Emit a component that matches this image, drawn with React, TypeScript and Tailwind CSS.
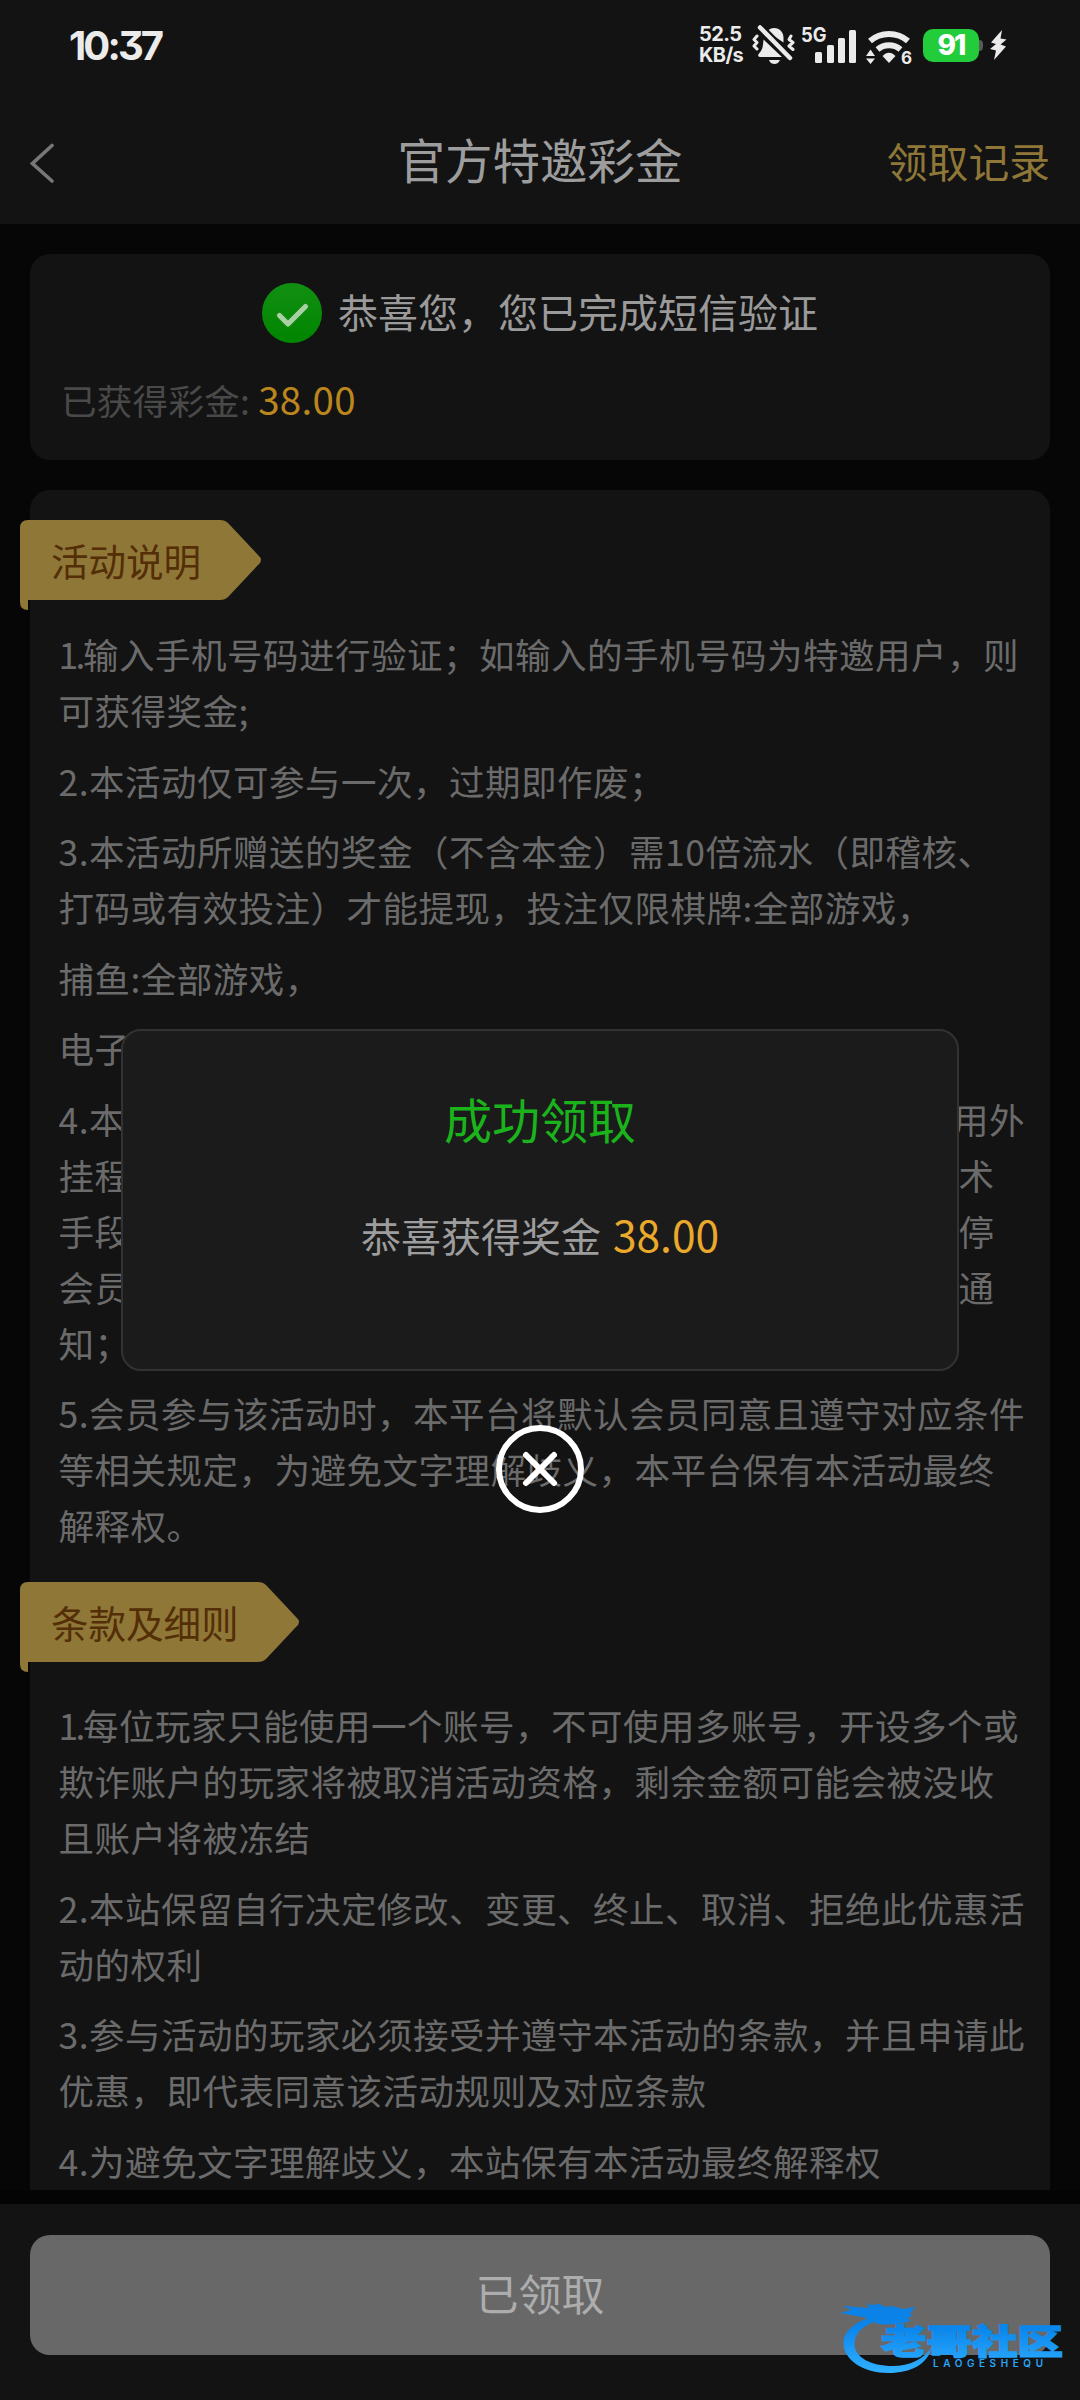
const activityRules = [
    ["1.输入手机号码进行验证；如输入的手机号码为特邀用户，则", "可获得奖金;"],
    ["2.本活动仅可参与一次，过期即作废；"],
    ["3.本活动所赠送的奖金（不含本金）需10倍流水（即稽核、", "打码或有效投注）才能提现，投注仅限棋牌:全部游戏，"],
    ["捕鱼:全部游戏，"],
    ["电子:全部游戏，"],
    [
        "4.本优惠仅限账号所有人进行正常游戏，禁止租借，或使用外",
        "挂程序、机器人、不同账号对赌、互刷、套利、漏洞等技术",
        "手段参与，否则平台有权取消扣除奖励、冻结账号甚至暂停",
        "会员账号的使用权限，并保留追究责任的权利，且不另行通",
        "知；",
    ],
    [
        "5.会员参与该活动时，本平台将默认会员同意且遵守对应条件",
        "等相关规定，为避免文字理解歧义，本平台保有本活动最终",
        "解释权。",
    ],
];

const terms = [
    [
        "1.每位玩家只能使用一个账号，不可使用多账号，开设多个或",
        "欺诈账户的玩家将被取消活动资格，剩余金额可能会被没收",
        "且账户将被冻结",
    ],
    ["2.本站保留自行决定修改、变更、终止、取消、拒绝此优惠活", "动的权利"],
    ["3.参与活动的玩家必须接受并遵守本活动的条款，并且申请此", "优惠，即代表同意该活动规则及对应条款"],
    ["4.为避免文字理解歧义，本站保有本活动最终解释权"],
];

const StatusBar = () => (
    <div className="flex h-[90px] items-center justify-between pl-[69px] pr-[73px] text-[#ebebeb]">
        <span className="mt-[2px] font-[Inter] text-[40px] leading-none font-bold tracking-[-2.900px] [font-feature-settings:'cv09']">
            10:37
        </span>
        <div className="flex items-center">
            <div className="mr-[10px] w-[43px] font-[Inter] text-[20px] leading-[21px] font-bold tracking-[-0.6px] whitespace-nowrap">
                <p>52.5</p>
                <p>KB/s</p>
            </div>
            <svg width="44" height="40" viewBox="0 0 44 40" className="mr-[5px]" fill="currentColor">
                <path d="M15 6.5C17 4.500 19 3 22 3c6 0 9.500 4.500 9.500 10v4.500z" />
                <path d="M11.500 14.500 L30 32H8c-2 0-2.500-2-1-3.500 3-3 4-6 4.500-14z" />
                <path d="M17 35h11c-1.500 3-3.500 4-5.500 4s-4.500-1-5.500-4z" />
                <path d="M8 2.500 L38 33" stroke="#131313" strokeWidth="9" />
                <path d="M8 2.500 L38 33" stroke="currentColor" strokeWidth="4.500" strokeLinecap="round" />
                <path d="M5 11l-3 3.500 3 3-3 3.500 3 3M39 11l-2 3.500 4 3-4 3.500 4 3.500" fill="none" stroke="currentColor" strokeWidth="3" strokeLinecap="round" strokeLinejoin="round" />
            </svg>
            <svg width="56" height="40" viewBox="0 0 56 40" className="mr-[9px]" fill="currentColor">
                <text x="0" y="17" className="font-[Inter] text-[20px] font-bold" textLength="25.500" lengthAdjust="spacingAndGlyphs">5G</text>
                <rect x="14" y="27" width="7" height="11" rx="1.500" />
                <rect x="26" y="20" width="7" height="18" rx="1.500" />
                <rect x="37" y="13" width="7" height="25" rx="1.500" />
                <rect x="48" y="5" width="7" height="33" rx="1.500" />
            </svg>
            <svg width="47" height="40" viewBox="0 0 47 40" className="mr-[10px] overflow-visible" fill="currentColor">
                <path d="M4 16a29 29 0 0 1 38 0" fill="none" stroke="currentColor" strokeWidth="6" />
                <path d="M11.500 24.500a18 18 0 0 1 23 0" fill="none" stroke="currentColor" strokeWidth="6" />
                <path d="M16.500 31c4-4.500 9-4.500 13 0L23 38z" />
                <path d="M0 31 4.500 24.500 9 31zM0 33.500h9L4.500 39z" />
                <text x="35" y="38.500" className="font-[Inter] text-[17px] font-bold">6</text>
            </svg>
            <div className="flex h-[33px] w-[56px] items-center justify-center rounded-[10px] bg-[#22cc3a] font-[Inter] text-[28px] leading-none font-extrabold tracking-[-2px] text-white">
                91
            </div>
            <div className="mr-[7px] h-[11px] w-[4px] rounded-r-[4px] bg-[#5a5a5a]" />
            <svg width="17" height="32" viewBox="0 0 17 32" fill="currentColor">
                <path d="M12 1 1 13.500 6 15 0 20 6 21.500 4 31 16 17.500 10.500 15.500 16.500 10.500 10.500 9.500z" />
            </svg>
        </div>
    </div>
);

const Header = () => (
    <header className="h-[224px] shrink-0 bg-[#131313]">
        <StatusBar />
        <div className="grid h-[138px] grid-cols-[1fr_auto_1fr] items-center px-[30px] leading-none">
            <svg width="25" height="40" viewBox="0 0 25 40" className="mt-[8px]" fill="none" stroke="#777777" strokeWidth="3.600" strokeLinecap="round">
                <path d="M22 2.500 2.500 20.500 22 38" />
            </svg>
            <h1 className="text-[47.5px] text-[#9d9d9d]">官方特邀彩金</h1>
            <a className="mt-[4px] text-right text-[40.800px] text-[#8f7738]">领取记录</a>
        </div>
    </header>
);

const TagTitle = ({ text, width }: { text: string; width: number }) => {
    const flat = width - 36;
    return (
        <div className="relative -ml-[10px] h-[80px]">
            <svg className="absolute top-0 left-0" width={width} height="91" viewBox={`0 0 ${width} 91`} fill="#8f7738">
                <path
                    d={`M8 0H${flat - 6}q5 0 8 3L${width - 4} 35q6 5 0 10L${flat + 2} 77q-3 3-8 3H8V90Q0 90 0 82V8Q0 0 8 0z`}
                />
            </svg>
            <h2 className="relative pl-[31px] text-[37.500px] leading-[79px] text-[#532e06]">{text}</h2>
        </div>
    );
};

const RuleLine = ({ line }: { line: string }) => {
    // the digit 1 is narrower than the others
    if (line.startsWith("1.")) {
        return (
            <p>
                <span className="tracking-[-2.600px]">1.</span>
                {line.slice(2)}
            </p>
        );
    }
    return <p>{line}</p>;
};

const RuleList = ({ rules, className }: { rules: string[][]; className: string }) => (
    <div className={`flex flex-col gap-[14.500px] pl-[28.500px] text-[35.500px] leading-[56px] tracking-[0.500px] whitespace-nowrap text-[#6b6b6b] ${className}`}>
        {rules.map((lines) => (
            <div key={lines[0]}>
                {lines.map((line) => (
                    <RuleLine key={line} line={line} />
                ))}
            </div>
        ))}
    </div>
);

const ResultDialog = () => (
    <div className="absolute inset-x-0 top-[1029px] flex flex-col items-center">
        <div className="flex h-[342px] w-[838px] flex-col items-center rounded-[20px] border-2 border-[#323232] bg-[#1b1b1b] pt-[59px]">
            <h3 className="text-[48px] leading-[56px] text-[#1ab31c]">成功领取</h3>
            <p className="mt-[60px] text-[40px] leading-[56px] text-[#9d9d9d]">
                恭喜获得奖金<span className="ml-[12px] text-[42.500px] text-[#eba92b]">38.00</span>
            </p>
        </div>
        <svg width="88" height="88" viewBox="0 0 88 88" className="mt-[54px]" fill="none" stroke="#fff" strokeWidth="6" strokeLinecap="round">
            <circle cx="44" cy="44" r="41" />
            <path d="M30 30 58 58M58 30 30 58" />
        </svg>
    </div>
);

const Watermark = () => (
    <svg className="absolute top-[2300px] left-[840px]" width="230" height="80" viewBox="0 0 230 80">
        <defs>
            <linearGradient id="mark" gradientUnits="userSpaceOnUse" x1="0" y1="5" x2="0" y2="72">
                <stop offset="0" stopColor="#0a80e6" />
                <stop offset="0.35" stopColor="#0b86ec" />
                <stop offset="1" stopColor="#2fb0ff" />
            </linearGradient>
        </defs>
        <g fill="url(#mark)">
            <path d="M28 18C12 24 3.500 33 3.500 43c0 17 20 30 45 30 22 0 40-9 43-26-7 12-22 19-39 19-22 0-38-9-38-22 0-10 7-17 19-22 7 4 24 3 37-1l-3-3 6-3-4-1 6-7-13 2-10-3-6 1-8-3-7 1-5-2 3 5-27-2 9 4-12 3z" />
            <text x="41" y="54" className="text-[34px] font-black" textLength="182" lengthAdjust="spacingAndGlyphs" stroke="url(#mark)" strokeWidth="1.500">
                老哥社区
            </text>
            <text x="93" y="67" className="font-[Inter] text-[10px] font-semibold" textLength="110">
                LAOGESHEQU
            </text>
        </g>
    </svg>
);

export default function App() {
    return (
        <div className="relative flex h-[2400px] w-[1080px] flex-col overflow-hidden bg-[#040404] font-['Noto_Sans_CJK_SC',sans-serif]">
            <Header />
            <main className="flex h-[1966px] shrink-0 flex-col gap-[30px] overflow-hidden bg-[#060606] px-[30px] pt-[30px]">
                <section className="h-[206px] shrink-0 rounded-[20px] bg-[#131313] pt-[28px]">
                    <div className="flex h-[62px] items-center justify-center gap-[16px]">
                        <svg width="60" height="60" viewBox="0 0 60 60">
                            <defs>
                                <linearGradient id="ok" x1="0" y1="0" x2="0" y2="1">
                                    <stop offset="0" stopColor="#128f12" />
                                    <stop offset="1" stopColor="#008500" />
                                </linearGradient>
                            </defs>
                            <circle cx="30" cy="30" r="30" fill="url(#ok)" />
                            <path d="M17.500 32.500 26 41 43.500 23.500" fill="none" stroke="#a9cfa5" strokeWidth="5.200" strokeLinecap="round" strokeLinejoin="round" />
                        </svg>
                        <span className="-mt-[5px] text-[40px] leading-[56px] text-[#9a9a9a]">恭喜您，您已完成短信验证</span>
                    </div>
                    <p className="mt-[26px] pl-[31px] text-[35.500px] leading-[56px] tracking-[0.300px] text-[#494949]">
                        已获得彩金:<span className="ml-[8px] text-[38.500px] text-[#bc861f]">38.00</span>
                    </p>
                </section>
                <section className="shrink-0 rounded-[20px] bg-[#131313] pt-[30px] pb-[60px]">
                    <TagTitle text="活动说明" width={242} />
                    <RuleList rules={activityRules} className="mt-[26px] mb-[29px]" />
                    <TagTitle text="条款及细则" width={280} />
                    <RuleList rules={terms} className="mt-[35px]" />
                </section>
            </main>
            <footer className="mt-[14px] h-[196px] bg-[#131313] px-[30px] pt-[31px]">
                <button className="h-[120px] w-full rounded-[20px] bg-[#686868] pb-[6px] text-[43px] text-[#adadad]">已领取</button>
            </footer>
            <ResultDialog />
            <Watermark />
        </div>
    );
}
